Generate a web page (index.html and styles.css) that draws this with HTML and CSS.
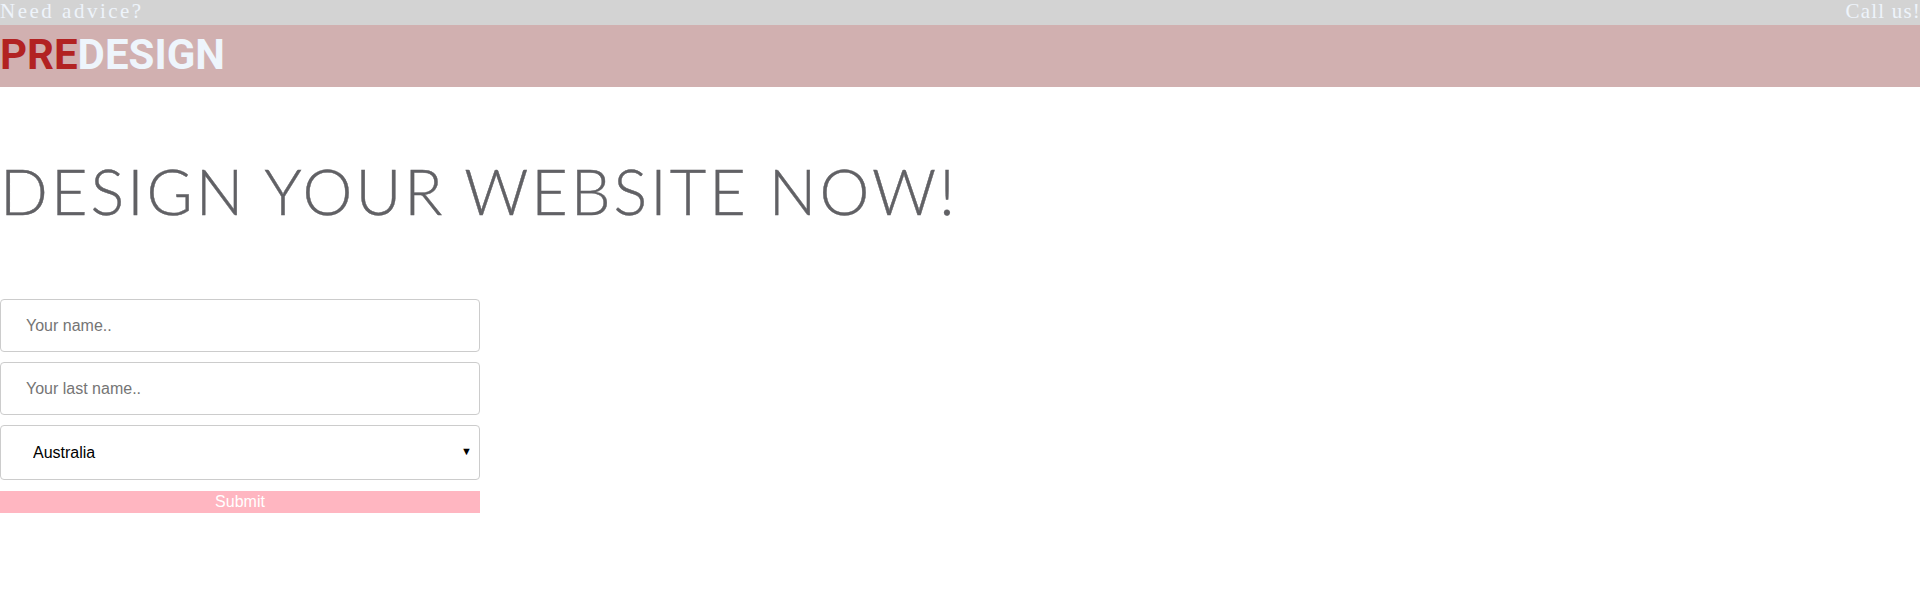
FILE: index.html
```html
<!DOCTYPE html>
<html lang="en">
<head>
<meta charset="utf-8">
<title>PreDesign</title>
<link rel="stylesheet" href="styles.css">
</head>
<body>
<div class="topbar">
  <span class="topbar-text">Need advice?</span>
  <span class="topbar-text">Call us!</span>
</div>
<header class="header">
  <div class="logo"><span class="logo-pre">PRE</span><span class="logo-design">DESIGN</span></div>
</header>
<main class="main">
  <h1 class="title">DESIGN YOUR WEBSITE NOW!</h1>
  <form class="form">
    <input class="field" type="text" placeholder="Your name..">
    <input class="field" type="text" placeholder="Your last name..">
    <div class="select-wrap">
      <select class="field select">
        <option>Australia</option>
        <option>Canada</option>
        <option>USA</option>
      </select>
      <span class="select-arrow">&#9660;</span>
    </div>
    <button class="submit" type="button">Submit</button>
  </form>
</main>
</body>
</html>
```
FILE: styles.css
```css
* { box-sizing: border-box; }
html, body { margin: 0; padding: 0; background: #ffffff; }
body { font-family: "Liberation Sans", Arial, sans-serif; }

.topbar {
  height: 25px;
  background: #d3d3d3;
  display: flex;
  justify-content: space-between;
  align-items: flex-start;
}
.topbar-text {
  font-family: "Liberation Serif", "Times New Roman", serif;
  font-size: 21px;
  line-height: 23px;
  letter-spacing: 2.5px;
  color: #eef4fb;
}
.topbar-text:last-child { letter-spacing: 1.2px; margin-right: -1px; }

.header {
  height: 62px;
  background: #d1b0b0;
  display: flex;
  align-items: center;
}
.logo {
  font-family: Roboto, "Liberation Sans", sans-serif;
  font-weight: 700;
  font-size: 42px;
  line-height: 49px;
  margin-top: -3px;
}
.logo-pre { color: #b22222; }
.logo-design { color: #eef5fc; }

.main { padding-top: 66px; }

.title {
  margin: 0 0 70px 0;
  font-family: Lato, "Open Sans", sans-serif;
  font-weight: 300;
  font-size: 63px;
  line-height: 76px;
  color: #616165;
  letter-spacing: 3px;
  -webkit-text-stroke: 0.4px #616165;
}

.form {
  width: 480px;
  display: flex;
  flex-direction: column;
  gap: 10px;
}
.field {
  width: 100%;
  height: 53px;
  padding: 0 25px;
  border: 1px solid #cccccc;
  border-radius: 4px;
  font-family: "Liberation Sans", Arial, sans-serif;
  font-size: 16px;
  color: #000;
  background: #fff;
  outline: none;
}
.field::placeholder { color: #757575; }
.select-wrap { position: relative; }
.select {
  height: 55px;
  padding-left: 32px;
  appearance: none;
  -webkit-appearance: none;
}
.select-arrow {
  position: absolute;
  right: 8px;
  top: 20px;
  font-size: 11px;
  color: #000;
  pointer-events: none;
}
.submit {
  height: 22px;
  margin-top: 1px;
  border: none;
  background: #ffb6c1;
  color: #ffffff;
  font-family: "Liberation Sans", Arial, sans-serif;
  font-size: 16px;
  padding: 0;
  line-height: 22px;
}
```
